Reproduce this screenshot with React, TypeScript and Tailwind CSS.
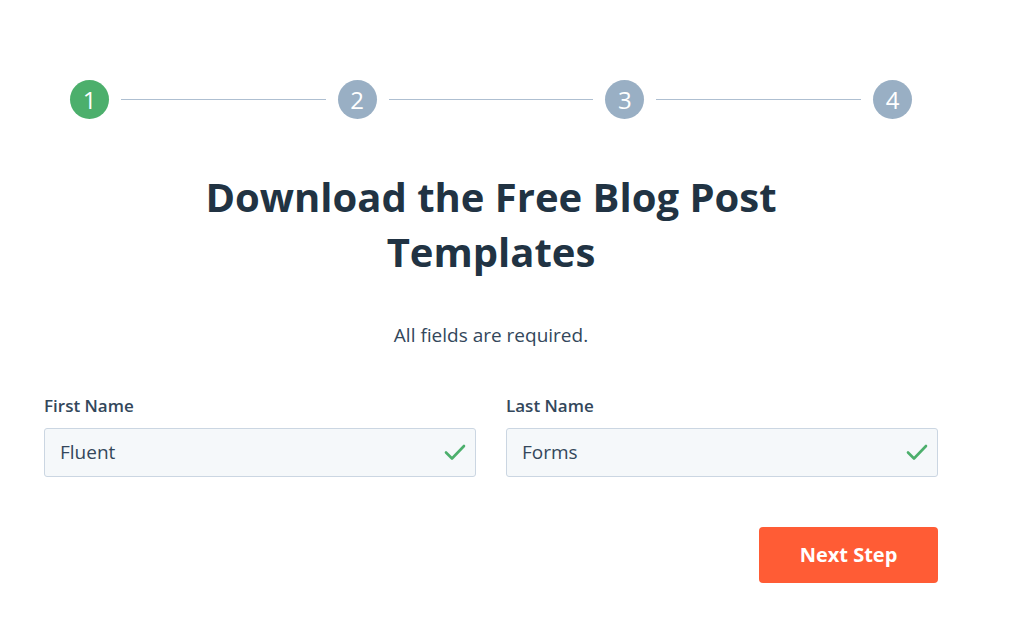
import React from "react";

const steps = [1, 2, 3, 4];

const Check = () => (
  <svg width="22" height="18" viewBox="0 0 22 18" fill="none" className="shrink-0">
    <path d="M2 9.5l6 6L20 3" stroke="#4caf6c" strokeWidth="2.6" strokeLinecap="round" strokeLinejoin="round" />
  </svg>
);

const Field = ({ label, value }: { label: string; value: string }) => (
  <div className="flex flex-col flex-1">
    <label className="text-[17px] font-semibold text-[#33475b] leading-5 mb-[12px]">{label}</label>
    <div className="h-[49px] flex items-center justify-between pl-[15px] pr-[9px] bg-[#f5f8fa] border border-[#cbd6e2] rounded-[3px]">
      <span className="text-[19px] text-[#33475b]">{value}</span>
      <Check />
    </div>
  </div>
);

export default function App() {
  return (
    <div className="w-full min-h-screen bg-white font-['Open_Sans','Liberation_Sans',sans-serif]">
      <div className="w-[894px] ml-[44px] pt-[80px]">
        <div className="flex items-center px-[26px]">
          {steps.map((n, i) => (
            <React.Fragment key={n}>
              <div
                className={`w-[39px] h-[39px] rounded-full flex items-center justify-center text-white text-[24px] font-normal shrink-0 ${
                  i === 0 ? "bg-[#4caf6c]" : "bg-[#99afc4]"
                }`}
              >
                {n}
              </div>
              {i < steps.length - 1 && <div className="flex-1 h-px bg-[#aebfd1] mx-[12px]" />}
            </React.Fragment>
          ))}
        </div>

        <h1 className="mt-[50px] mx-auto w-[620px] text-center text-[40px] leading-[55px] font-bold text-[#213343]">
          Download the Free Blog Post Templates
        </h1>

        <p className="mt-[42px] text-center text-[19px] text-[#33475b]">All fields are required.</p>

        <div className="mt-[46px] flex gap-[30px]">
          <Field label="First Name" value="Fluent" />
          <Field label="Last Name" value="Forms" />
        </div>

        <div className="mt-[50px] flex justify-end">
          <button className="w-[179px] h-[56px] rounded-[4px] bg-[#ff5c35] text-white text-[20px] font-bold">
            Next Step
          </button>
        </div>
      </div>
    </div>
  );
}
